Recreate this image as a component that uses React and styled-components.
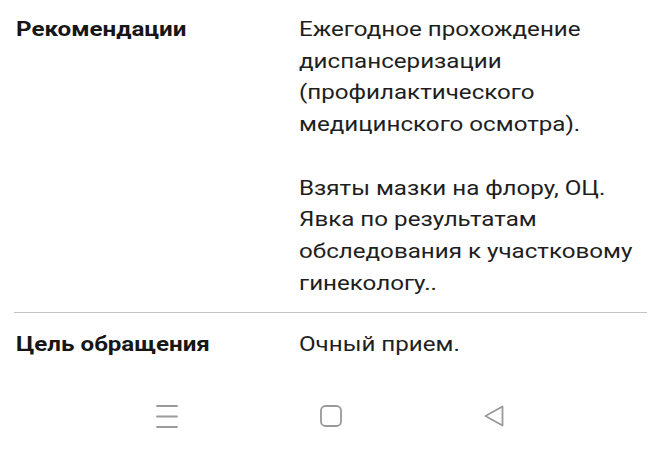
import React from "react";
import styled, { createGlobalStyle } from "styled-components";

const Global = createGlobalStyle`
  html, body { margin: 0; padding: 0; background: #ffffff; }
  body { font-family: Roboto, "Noto Sans", sans-serif; -webkit-font-smoothing: antialiased; }
  * { box-sizing: border-box; }
`;

const Page = styled.div`
  width: 660px;
  height: 457px;
  overflow: hidden;
  background: #ffffff;
  display: flex;
  flex-direction: column;
`;

const List = styled.div`
  padding: 0 13px 0 14px;
  display: flex;
  flex-direction: column;
`;

const Row = styled.div`
  display: grid;
  grid-template-columns: 283px 1fr;
  padding: ${(p) => p.$pt}px 0 ${(p) => p.$pb}px 2px;
  border-bottom: ${(p) => (p.$divider ? "1px solid #c4c4c4" : "none")};
`;

/* the screenshot is slightly widened horizontally, so the glyphs are stretched */
const Text = styled.div`
  font-family: Roboto, sans-serif;
  font-size: 21px;
  line-height: 31.7px;
  white-space: pre;
  transform: scaleX(1.15);
  transform-origin: left top;
`;

const Label = styled(Text)`
  font-weight: 700;
  color: #161616;
`;

const Value = styled(Text)`
  font-weight: 400;
  color: #1e1e1e;
`;

const NavBar = styled.div`
  margin-top: auto;
  height: 80px;
  display: flex;
  align-items: center;
  justify-content: center;
  gap: 142px;
  padding-bottom: 2px;
`;

const NavIcon = styled.svg`
  display: block;
  flex: none;
`;

const rows = [
  {
    label: "Рекомендации",
    value:
      "Ежегодное прохождение\nдиспансеризации\n(профилактического\nмедицинского осмотра).\n\nВзяты мазки на флору, ОЦ.\nЯвка по результатам\nобследования к участковому\nгинекологу..",
    pt: 14,
    pb: 13,
    divider: true,
  },
  { label: "Цель обращения", value: "Очный прием.", pt: 16, pb: 0, divider: false },
];

export default function App() {
  return (
    <>
      <Global />
      <Page>
        <List>
          {rows.map((r) => (
            <Row key={r.label} $pt={r.pt} $pb={r.pb} $divider={r.divider}>
              <Label>{r.label}</Label>
              <Value>{r.value}</Value>
            </Row>
          ))}
        </List>
        <NavBar>
          <NavIcon width="22" height="24" viewBox="0 0 22 24">
            <g stroke="#9a9a9a" strokeWidth="1.8" strokeLinecap="round">
              <line x1="1" y1="2" x2="21" y2="2" />
              <line x1="1" y1="12.5" x2="21" y2="12.5" />
              <line x1="1" y1="23" x2="21" y2="23" />
            </g>
          </NavIcon>
          <NavIcon width="22" height="22" viewBox="0 0 22 22">
            <rect x="1" y="1" width="20" height="20" rx="4.5" fill="none" stroke="#9a9a9a" strokeWidth="1.8" />
          </NavIcon>
          <NavIcon width="20" height="22" viewBox="0 0 20 22">
            <path d="M18.5 1.5 L1.5 11 L18.5 20.5 Z" fill="none" stroke="#9a9a9a" strokeWidth="1.8" strokeLinejoin="round" />
          </NavIcon>
        </NavBar>
      </Page>
    </>
  );
}
